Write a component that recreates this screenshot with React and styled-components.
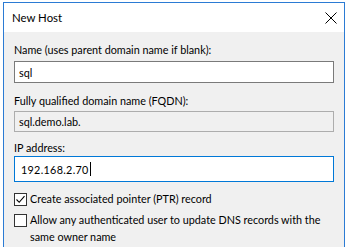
import React from 'react';
import styled, { createGlobalStyle } from 'styled-components';

const GlobalStyle = createGlobalStyle`
  html, body { margin: 0; padding: 0; background: #ffffff; }
  body { font-family: Lato, "Noto Sans", sans-serif; }
`;

const Page = styled.div`
  width: 356px;
  height: 247px;
  overflow: hidden;
  background: #ffffff;
  padding: 2px 0 0 3px;
  box-sizing: border-box;
`;

const Window = styled.div`
  width: 342px;
  height: 260px;
  border: 1px solid #2b7bd4;
  box-sizing: border-box;
  background: #f0f0f0;
  display: flex;
  flex-direction: column;
`;

const TitleBar = styled.div`
  height: 29px;
  background: #ffffff;
  display: flex;
  align-items: center;
  justify-content: space-between;
  padding: 0 7px 0 8px;
  flex-shrink: 0;
`;

const Title = styled.span`
  font-size: 11.4px;
  color: #000;
`;

const Body = styled.div`
  display: flex;
  flex-direction: column;
  padding: 10px 10px 0 10px;
  font-size: 10.8px;
  color: #000;
`;

const Field = styled.div`
  display: flex;
  flex-direction: column;
  gap: ${p => p.$gap ?? 3}px;
  margin-bottom: ${p => p.$mb ?? 10}px;
`;

const Label = styled.label`
  line-height: 16px;
`;

const TextBox = styled.div`
  height: ${p => p.$h || 22}px;
  box-sizing: border-box;
  border: 1px solid ${p => (p.$focus ? '#0078d7' : p.$readOnly ? '#adadad' : '#7a7a7a')};
  background: ${p => (p.$readOnly ? '#f0f0f0' : '#ffffff')};
  display: flex;
  align-items: center;
  padding-left: ${p => p.$pl ?? 4}px;
  width: 320px;
`;

const IpText = styled.span`
  letter-spacing: 0.3px;
`;

const Caret = styled.span`
  display: inline-block;
  width: 1px;
  height: 14px;
  background: #000;
  margin-left: 1px;
`;

const CheckRow = styled.div`
  display: flex;
  align-items: flex-start;
  gap: 3px;
  margin-right: -12px;
  margin-bottom: ${p => p.$mb || 0}px;
`;

const Box = styled.span`
  width: 13px;
  height: 13px;
  box-sizing: border-box;
  border: 1px solid #333;
  background: #fff;
  flex-shrink: 0;
  margin-top: 3px;
  display: flex;
  align-items: center;
  justify-content: center;
`;

const CheckText = styled.span`
  line-height: 17px;
`;

export default function App() {
  return (
    <Page>
      <GlobalStyle />
      <Window>
        <TitleBar>
          <Title>New Host</Title>
          <svg width="12" height="12" viewBox="0 0 12 12">
            <path d="M0.5 0.5 L11.5 11.5 M11.5 0.5 L0.5 11.5" stroke="#000" strokeWidth="1" />
          </svg>
        </TitleBar>
        <Body>
          <Field>
            <Label>Name (uses parent domain name if blank):</Label>
            <TextBox>sql</TextBox>
          </Field>
          <Field $gap={2} $mb={8}>
            <Label>Fully qualified domain name (FQDN):</Label>
            <TextBox $readOnly $h={21}>sql.demo.lab.</TextBox>
          </Field>
          <Field $gap={0} $mb={8}>
            <Label>IP address:</Label>
            <TextBox $focus $h={26} $pl={6}><IpText>192.168.2.70</IpText><Caret /></TextBox>
          </Field>
          <CheckRow $mb={4}>
            <Box>
              <svg width="11" height="11" viewBox="0 0 11 11">
                <path d="M1.5 5.5 L4.2 8.3 L9.5 2.2" stroke="#000" strokeWidth="1.1" fill="none" />
              </svg>
            </Box>
            <CheckText>Create associated pointer (PTR) record</CheckText>
          </CheckRow>
          <CheckRow>
            <Box />
            <CheckText>Allow any authenticated user to update DNS records with the same owner name</CheckText>
          </CheckRow>
        </Body>
      </Window>
    </Page>
  );
}
